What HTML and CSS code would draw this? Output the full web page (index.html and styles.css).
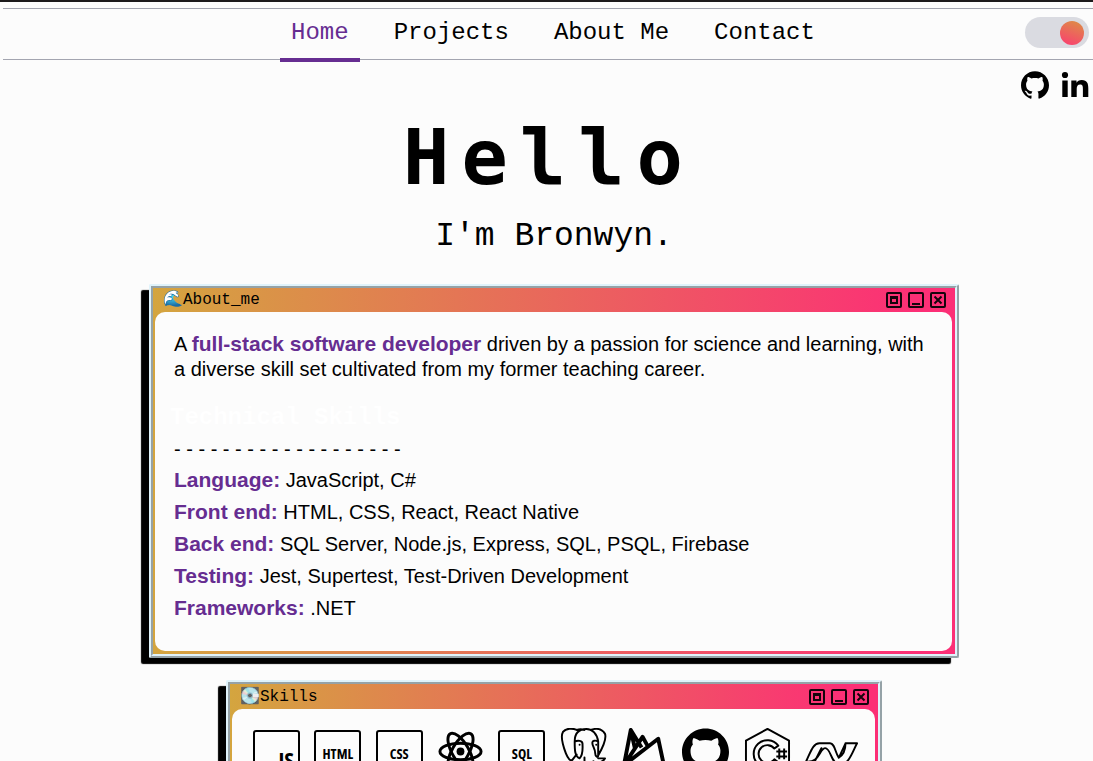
FILE: index.html
```html
<!DOCTYPE html>
<html lang="en">
<head>
<meta charset="utf-8">
<meta name="viewport" content="width=device-width, initial-scale=1">
<title>Bronwyn</title>
<link rel="stylesheet" href="styles.css">
</head>
<body>
<svg class="sprite" aria-hidden="true">
  <symbol id="github" viewBox="0 0 24 24"><path d="M12 .297c-6.63 0-12 5.373-12 12 0 5.303 3.438 9.8 8.205 11.385.6.113.82-.258.82-.577 0-.285-.01-1.04-.015-2.04-3.338.724-4.042-1.61-4.042-1.61C4.422 18.07 3.633 17.7 3.633 17.7c-1.087-.744.084-.729.084-.729 1.205.084 1.838 1.236 1.838 1.236 1.07 1.835 2.809 1.305 3.495.998.108-.776.417-1.305.76-1.605-2.665-.3-5.466-1.332-5.466-5.93 0-1.31.465-2.38 1.235-3.22-.135-.303-.54-1.523.105-3.176 0 0 1.005-.322 3.3 1.23.96-.267 1.98-.399 3-.405 1.02.006 2.04.138 3 .405 2.28-1.552 3.285-1.23 3.285-1.23.645 1.653.24 2.873.12 3.176.765.84 1.23 1.91 1.23 3.22 0 4.61-2.805 5.625-5.475 5.92.42.36.81 1.096.81 2.22 0 1.606-.015 2.896-.015 3.286 0 .315.21.69.825.57C20.565 22.092 24 17.592 24 12.297c0-6.627-5.373-12-12-12"/></symbol>
  <symbol id="controls" viewBox="0 0 62 18">
    <g fill="none" stroke="#15040c" stroke-width="2">
      <rect x="2" y="2" width="14" height="14" rx="1"/><rect x="24" y="2" width="14" height="14" rx="1"/><rect x="46" y="2" width="14" height="14" rx="1"/>
      <rect x="6" y="6" width="6" height="6"/><path d="M5 7h8M27 13h8M49.500 5.500l7 7M56.500 5.500l-7 7"/>
    </g>
  </symbol>
</svg>
<header class="topbar">
  <nav class="nav" aria-label="Main">
    <a class="nav-link active" href="#home">Home</a>
    <a class="nav-link" href="#projects">Projects</a>
    <a class="nav-link" href="#about">About Me</a>
    <a class="nav-link" href="#contact">Contact</a>
  </nav>
  <input class="toggle" type="checkbox" role="switch" aria-label="Light theme" checked>
</header>
<div class="social">
  <a href="#github-profile" aria-label="GitHub"><svg class="social-icon"><use href="#github"/></svg></a>
  <a href="#linkedin-profile" aria-label="LinkedIn"><svg class="social-icon" viewBox="0 0 28 28"><circle cx="4" cy="4" r="3.100"/><path d="M1.300 9.500h5.400V26H1.300zM10.300 9.500h5.200v2.300c.8-1.500 2.600-2.700 5.300-2.700 5.500 0 6.500 3.600 6.500 8.300V26h-5.400v-8c0-2 0-4.400-2.700-4.400s-3.500 2.100-3.500 4.300V26h-5.400z"/></svg></a>
</div>
<main class="page">
  <h1 class="hello">Hello</h1>
  <p class="intro">I'm Bronwyn.</p>
  <section class="window about">
    <div class="titlebar"><span class="title">🌊About_me</span><svg class="controls"><use href="#controls"/></svg></div>
    <div class="panel about-panel">
      <p class="lead">A <strong>full-stack software developer</strong> driven by a passion for science and learning, with a diverse skill set cultivated from my former teaching career.</p>
      <h2 class="tech-title">Technical Skills</h2>
      <p class="dashes">- - - - - - - - - - - - - - - - - - -</p>
      <ul class="skills-list">
        <li><strong>Language:</strong> JavaScript, C#</li>
        <li><strong>Front end:</strong> HTML, CSS, React, React Native</li>
        <li><strong>Back end:</strong> SQL Server, Node.js, Express, SQL, PSQL, Firebase</li>
        <li><strong>Testing:</strong> Jest, Supertest, Test-Driven Development</li>
        <li><strong>Frameworks:</strong> .NET</li>
      </ul>
    </div>
  </section>
  <section class="window skills">
    <div class="titlebar"><span class="title">💽Skills</span><svg class="controls"><use href="#controls"/></svg></div>
    <div class="panel icons">
      <span class="tile js">JS</span>
      <span class="tile">HTML</span>
      <span class="tile">CSS</span>
      <svg class="icon" viewBox="0 0 48 48"><g fill="none" stroke="#000" stroke-width="3"><ellipse cx="24" cy="24" rx="21" ry="8.500"/><ellipse cx="24" cy="24" rx="21" ry="8.500" transform="rotate(60 24 24)"/><ellipse cx="24" cy="24" rx="21" ry="8.500" transform="rotate(120 24 24)"/></g><circle cx="24" cy="24" r="4"/></svg>
      <span class="tile">SQL</span>
      <svg class="icon" viewBox="0 0 48 48"><g fill="none" stroke="#000" stroke-width="2" stroke-linecap="round" stroke-linejoin="round"><path d="M17 2C13 0 6 0 3 4c-3 5 0 14 3 22 2 5 5 9 7 6l4-5M15 14C15 5 20 1 27 1c6 0 11 5 12 13M17 2c3-1 5-1 8 0M31 2c6-2 12-1 15 4 2 6-3 15-7 22M15 14c3-2 8-1 8 2 0 5 1 11-3 15-5-2-5-9-5-17zM39 14c-3-2-6-1-6 1 0 4 3 6 3 11 0 3 3 5 3 2zM39 31h7c-3 5-9 5-12 3v9c0 4-9 4-9 0V30"/></g><circle cx="20" cy="17" r="1"/><circle cx="37" cy="17" r="1"/></svg>
      <svg class="icon" viewBox="0 0 48 48"><path fill="none" stroke="#000" stroke-width="4" stroke-linejoin="round" d="M3 38L10 2l11 18M3 38L22 9l5 9M3 38l35-27 6 28-20 8zM10 2l4 18"/></svg>
      <svg class="icon"><use href="#github"/></svg>
      <svg class="icon" viewBox="0 0 48 48"><g fill="none" stroke="#000" stroke-width="2" stroke-linejoin="round"><path d="M24 1l22 12v24L24 47 2 37V13zM35 18a14 14 0 1 0 0 17l-4-3a9 9 0 1 1 0-11z"/><path d="M36 21v11M41 21v11M33 24h11M33 29h11"/></g></svg>
      <svg class="icon icon-wide" viewBox="0 0 56 48"><g fill="none" stroke="#000" stroke-width="2" stroke-linejoin="round" stroke-linecap="round"><path d="M1 34C6 24 8 15 15 15h11c5 0 5 9 9 15l7-15h12C49 24 46 37 36 37c-9 0-9-17-15-17S15 36 1 34M10 34l7-14M42 15c0 6-2 12-7 15"/></g></svg>
    </div>
  </section>
</main>
</body>
</html>
```
FILE: styles.css
```css
* { box-sizing: border-box; }
html { overflow: hidden; }
body {
  margin: 0;
  height: 100vh;
  overflow: hidden;
  border-top: 2px solid #1c1a1b;
  background: #fcfcfc;
  color: #000;
  font-family: "Liberation Sans", Arial, sans-serif;
}
h1, h2, p, ul { margin: 0; padding: 0; }
.sprite { position: absolute; width: 0; height: 0; }
.topbar {
  display: grid;
  grid-template-columns: 64px 1fr 64px;
  align-items: start;
  margin: 6px 0 0 3px;
  padding: 0 4px 0 14px;
  height: 52px;
  border-top: 1px solid #a3a5b0;
  border-bottom: 1px solid #a3a5b0;
}
.nav {
  grid-column: 2;
  display: flex;
  justify-content: center;
  gap: 23px;
  height: 53px;
}
.nav-link {
  padding: 10px 11px 0;
  color: #000;
  font: 24px/28px "Liberation Mono", monospace;
  text-decoration: none;
}
.nav-link.active { color: #662d91; border-bottom: 4px solid #662d91; }
.toggle {
  appearance: none;
  display: flex;
  justify-content: flex-end;
  align-items: center;
  margin: 8px 0 0;
  padding: 0 5px;
  width: 64px;
  height: 31px;
  border-radius: 16px;
  background: #dadbe1;
}
.toggle::before {
  content: "";
  width: 24px;
  height: 24px;
  border-radius: 50%;
  background: linear-gradient(200deg, #dc9144, #fb3c72);
}
.social { display: flex; justify-content: flex-end; gap: 12px; padding: 11px 4px 0 0; }
.social a { color: #000; height: 28px; }
.social-icon { display: block; width: 28px; height: 28px; }
.page { padding-left: 15px; }
.hello {
  padding-top: 13px;
  text-align: center;
  font: bold 77px/92px "DejaVu Sans Mono", monospace;
  letter-spacing: 12px;
  margin-right: 10px;
}
.intro { padding-top: 14px; text-align: center; font: 33px/38px "Liberation Mono", monospace; }
.window {
  margin: 0 auto;
  padding: 0 3px 3px 2px;
  border: 4px ridge #e0f3fb;
  background: linear-gradient(to right, #d4a53f, #fc2f76 95%) padding-box;
  border-radius: 2px;
  box-shadow: -8px 6px 1px #000;
}
.about { width: 76%; max-width: 810px; margin-top: 28px; }
.skills { width: 62%; max-width: 656px; margin-top: 22px; }
.titlebar {
  display: flex;
  justify-content: space-between;
  align-items: center;
  height: 24px;
  padding: 0 5px 0 8px;
}
.skills .titlebar { height: 25px; }
.title { font: 16px/20px "Liberation Mono", "Noto Color Emoji", monospace; }
.controls { width: 62px; height: 18px; }
.panel { border-radius: 10px; background: #fcfcfc; }
.about-panel { padding: 19px 19px 27px; font-size: 20px; }
.lead { line-height: 25px; }
strong { color: #662d91; font-size: 21px; }
.tech-title {
  margin: 22px 0 0 -4px;
  color: #fff;
  font: bold 24px/28px "Liberation Mono", monospace;
}
.dashes { padding-top: 5px; line-height: 24px; }
.skills-list { list-style: none; line-height: 32px; padding-top: 3px; }
.icons { display: flex; justify-content: space-between; padding: 17px 16px 18px 21px; }
.icon { width: 47px; height: 47px; margin-top: 2px; }
.icon-wide { width: 54px; height: 48px; }
.tile {
  display: flex;
  align-items: center;
  justify-content: center;
  width: 47px;
  height: 47px;
  margin-top: 4px;
  border: 2px solid #000;
  border-radius: 3px;
  font: bold 14px "Open Sans", sans-serif;
  font-stretch: condensed;
}
.js { align-items: flex-end; justify-content: flex-end; padding: 0 4px 4px 0; font-size: 22px; line-height: 24px; }
```
